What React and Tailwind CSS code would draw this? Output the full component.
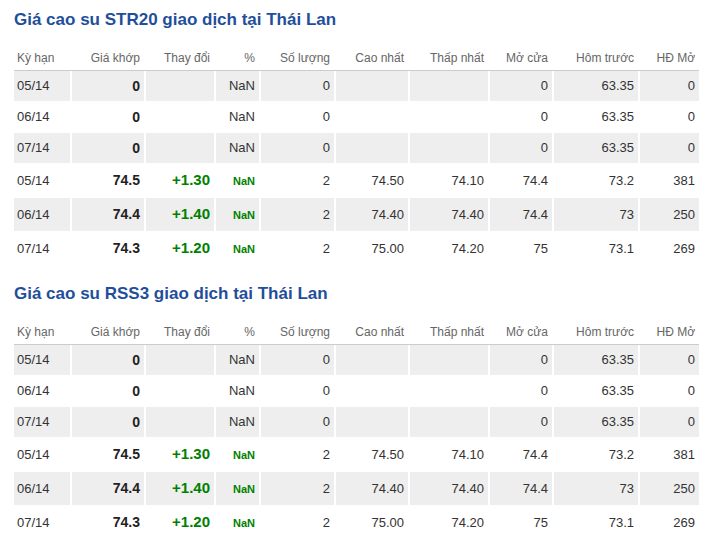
const COLUMNS = [
  { label: "Kỳ hạn", width: 56 },
  { label: "Giá khớp", width: 74 },
  { label: "Thay đổi", width: 70 },
  { label: "%", width: 45 },
  { label: "Số lượng", width: 75 },
  { label: "Cao nhất", width: 74 },
  { label: "Thấp nhất", width: 80 },
  { label: "Mở cửa", width: 64 },
  { label: "Hôm trước", width: 86 },
  { label: "HĐ Mở", width: 61 },
];

const ROWS = [
  { term: "05/14", price: "0", change: "", pct: "NaN", qty: "0", high: "", low: "", open: "0", prev: "63.35", oi: "0" },
  { term: "06/14", price: "0", change: "", pct: "NaN", qty: "0", high: "", low: "", open: "0", prev: "63.35", oi: "0" },
  { term: "07/14", price: "0", change: "", pct: "NaN", qty: "0", high: "", low: "", open: "0", prev: "63.35", oi: "0" },
  { term: "05/14", price: "74.5", change: "+1.30", pct: "NaN", qty: "2", high: "74.50", low: "74.10", open: "74.4", prev: "73.2", oi: "381" },
  { term: "06/14", price: "74.4", change: "+1.40", pct: "NaN", qty: "2", high: "74.40", low: "74.40", open: "74.4", prev: "73", oi: "250" },
  { term: "07/14", price: "74.3", change: "+1.20", pct: "NaN", qty: "2", high: "75.00", low: "74.20", open: "75", prev: "73.1", oi: "269" },
];

const SECTIONS = ["Giá cao su STR20 giao dịch tại Thái Lan", "Giá cao su RSS3 giao dịch tại Thái Lan"];

function PriceTable({ title }) {
  return (
    <section>
      <h2 className="h-[46px] pt-[10px] text-[17px] font-bold leading-[20px] text-[#1f4f9b]">{title}</h2>
      <table className="table-fixed border-separate border-spacing-0" style={{ width: 685 }}>
        <colgroup>
          {COLUMNS.map((c) => (
            <col key={c.label} style={{ width: c.width }} />
          ))}
        </colgroup>
        <thead>
          <tr className="h-[25px]">
            {COLUMNS.map((c, i) => (
              <th
                key={c.label}
                className={`shadow-[inset_0_-1px_0_#cccccc] pb-[1px] text-[12px] font-normal text-[#666666] ${
                  i === 0 ? "pl-[3px] text-left" : "pr-[4px] text-right"
                }`}
              >
                {c.label}
              </th>
            ))}
          </tr>
        </thead>
        <tbody>
          {ROWS.map((r, idx) => {
            const gray = idx % 2 === 0;
            const cell = `border-b border-l-2 border-white pr-[4px] text-right ${gray ? "bg-[#eeeeee]" : ""}`;
            return (
              <tr key={idx} className={idx >= 3 ? "h-[34px]" : "h-[31px]"}>
                <td className={`border-b border-white pl-[3px] text-left ${gray ? "bg-[#eeeeee]" : ""}`}>{r.term}</td>
                <td className={`${cell} text-[14px] font-bold text-[#222222]`}>{r.price}</td>
                <td className={`${cell} text-[15px] font-bold text-[#008000]`}>{r.change}</td>
                <td className={cell}>
                  {r.change ? <span className="text-[11px] font-bold text-[#008000]">{r.pct}</span> : r.pct}
                </td>
                <td className={cell}>{r.qty}</td>
                <td className={cell}>{r.high}</td>
                <td className={cell}>{r.low}</td>
                <td className={cell}>{r.open}</td>
                <td className={cell}>{r.prev}</td>
                <td className={cell}>{r.oi}</td>
              </tr>
            );
          })}
        </tbody>
      </table>
    </section>
  );
}

export default function App() {
  return (
    <div className="flex min-h-[548px] flex-col gap-[8px] bg-white px-[14px] font-['Liberation_Sans',Arial,sans-serif] text-[13px] text-[#333333]">
      {SECTIONS.map((t) => (
        <PriceTable key={t} title={t} />
      ))}
    </div>
  );
}
